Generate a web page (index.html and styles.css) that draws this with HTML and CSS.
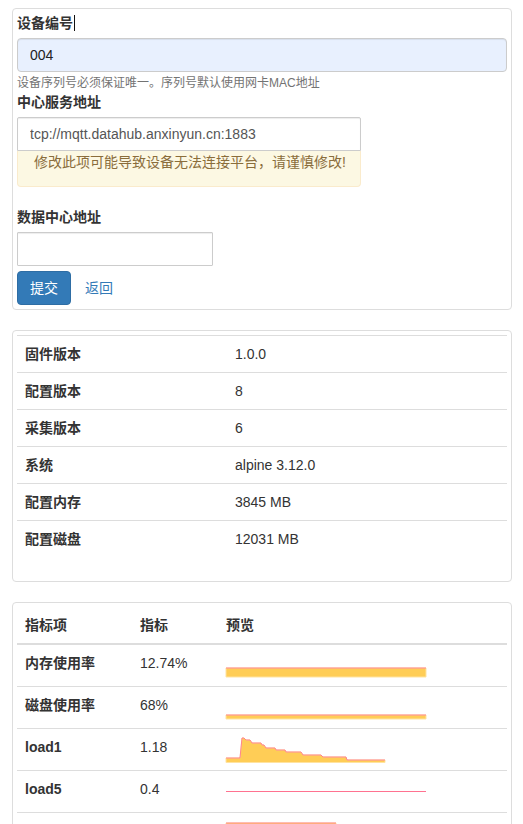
FILE: index.html
```html
<!DOCTYPE html>
<html lang="zh-CN">
<head>
<meta charset="utf-8">
<title>设备配置</title>
<link rel="stylesheet" href="styles.css">
</head>
<body>
<div class="page">
  <section class="panel panel-form">
    <form class="form">
      <label class="label">设备编号<span class="caret-mark"></span></label>
      <input class="input input-autofill" type="text" value="004">
      <p class="help">设备序列号必须保证唯一。序列号默认使用网卡MAC地址</p>
      <label class="label">中心服务地址</label>
      <div class="input-group">
        <input class="input input-attached" type="text" value="tcp://mqtt.datahub.anxinyun.cn:1883">
        <div class="warning">修改此项可能导致设备无法连接平台，请谨慎修改!</div>
      </div>
      <label class="label label-spaced">数据中心地址</label>
      <input class="input input-short" type="text" value="">
      <div class="actions">
        <button class="btn" type="button">提交</button>
        <a class="link" href="#">返回</a>
      </div>
    </form>
  </section>

  <section class="panel panel-info">
    <table class="table info-table">
      <tbody>
        <tr><th>固件版本</th><td>1.0.0</td></tr>
        <tr><th>配置版本</th><td>8</td></tr>
        <tr><th>采集版本</th><td>6</td></tr>
        <tr><th>系统</th><td>alpine 3.12.0</td></tr>
        <tr><th>配置内存</th><td>3845 MB</td></tr>
        <tr><th>配置磁盘</th><td>12031 MB</td></tr>
      </tbody>
    </table>
  </section>

  <section class="panel panel-metrics">
    <table class="table metric-table">
      <thead>
        <tr><th class="c1">指标项</th><th class="c2">指标</th><th class="c3">预览</th></tr>
      </thead>
      <tbody>
        <tr>
          <th>内存使用率</th><td>12.74%</td>
          <td><svg class="spark" width="200" height="25" viewBox="0 0 200 25">
            <polygon class="area" points="0,15 200,15 200,24 0,24"/>
            <polyline class="line" points="0,15 200,15"/>
          </svg></td>
        </tr>
        <tr>
          <th>磁盘使用率</th><td>68%</td>
          <td><svg class="spark" width="200" height="25" viewBox="0 0 200 25">
            <polygon class="area" points="0,20 200,20 200,24 0,24"/>
            <polyline class="line" points="0,20 200,20"/>
          </svg></td>
        </tr>
        <tr>
          <th>load1</th><td>1.18</td>
          <td><svg class="spark" width="200" height="25" viewBox="0 0 200 25">
            <polygon class="area" points="0,21 14,21 16,1 18,1 20,3 24,3 26,6 35,6 36,8 38,8 40,11 49,11 50,13 59,13 60,15 75,15 77,18 95,18 97,20 120,20 121,23 159,23 159,25.5 0,25.5"/>
            <polyline class="line" points="0,21 14,21 16,1 18,1 20,3 24,3 26,6 35,6 36,8 38,8 40,11 49,11 50,13 59,13 60,15 75,15 77,18 95,18 97,20 120,20 121,23 159,23"/>
          </svg></td>
        </tr>
        <tr>
          <th>load5</th><td>0.4</td>
          <td><svg class="spark" width="200" height="25" viewBox="0 0 200 25">
            <polyline class="line line-solid" points="0,12.5 200,12.5"/>
          </svg></td>
        </tr>
        <tr>
          <th></th><td></td>
          <td><svg class="spark" width="200" height="25" viewBox="0 0 200 25">
            <polygon class="area" points="0,2 110,2 110,24 0,24"/>
            <polyline class="line" points="0,2 110,2"/>
          </svg></td>
        </tr>
      </tbody>
    </table>
  </section>
</div>
</body>
</html>
```
FILE: styles.css
```css
* { box-sizing: border-box; }

html, body {
  margin: 0;
  padding: 0;
  background: #fff;
}

body {
  font-family: "Liberation Sans", Arial, "Noto Sans CJK SC", sans-serif;
  font-size: 14px;
  line-height: 20px;
  color: #333;
}

.page {
  padding: 8px 11px 8px 12px;
}

.panel {
  width: 500px;
  border: 1px solid #ddd;
  border-radius: 4px;
  padding: 4px;
  margin-bottom: 20px;
  background: #fff;
}

.form {
  display: flex;
  flex-direction: column;
  align-items: flex-start;
  margin: 0;
}

.label {
  display: block;
  font-weight: bold;
  margin-bottom: 5px;
  line-height: 20px;
}

.label-spaced {
  margin-top: 20px;
}

.caret-mark {
  display: inline-block;
  width: 1px;
  height: 16px;
  background: #111;
  margin-left: 1px;
  vertical-align: -3px;
}

.input {
  display: block;
  height: 34px;
  padding: 6px 12px;
  font-family: inherit;
  font-size: 14px;
  line-height: 20px;
  color: #555;
  background: #fff;
  border: 1px solid #ccc;
  border-radius: 4px;
  box-shadow: inset 0 1px 1px rgba(0, 0, 0, 0.075);
  outline: none;
  margin: 0;
}

.input-autofill {
  width: 100%;
  background: #e8f0fe;
  color: #222;
}

.help {
  margin: 3px 0 0;
  font-size: 12px;
  line-height: 17px;
  color: #737373;
}

.input-group {
  width: 344px;
}

.input-attached {
  width: 100%;
  border-radius: 2px 2px 0 0;
}

.warning {
  padding: 1px 4px 14px 16px;
  background: #fcf8e3;
  border: 1px solid #faebcc;
  border-top: 0;
  border-radius: 0 0 4px 4px;
  color: #8a6d3b;
  line-height: 20px;
  white-space: nowrap;
}

.input-short {
  width: 196px;
  border-radius: 1px;
}

.actions {
  display: flex;
  align-items: center;
  margin-top: 5px;
}

.btn {
  height: 34px;
  width: 54px;
  padding: 6px 12px;
  font-family: inherit;
  font-size: 14px;
  line-height: 20px;
  color: #fff;
  background: #337ab7;
  border: 1px solid #2e6da4;
  border-radius: 4px;
  margin: 0;
}

.link {
  margin-left: 14px;
  color: #337ab7;
  text-decoration: none;
}

.table {
  width: 100%;
  border-collapse: collapse;
  border-spacing: 0;
  margin-bottom: 20px;
}

.table th,
.table td {
  padding: 8px;
  text-align: left;
  vertical-align: top;
  line-height: 20px;
  border-top: 1px solid #ddd;
}

.table th {
  font-weight: bold;
}

.info-table th {
  width: 210px;
}

.metric-table thead th {
  border-top: 0;
  border-bottom: 2px solid #ddd;
}

.metric-table tbody tr:first-child th,
.metric-table tbody tr:first-child td {
  border-top: 0;
}

.metric-table .c1 { width: 115px; }
.metric-table .c2 { width: 86px; }

.spark {
  display: block;
  overflow: visible;
}

.spark .area {
  fill: #ffcd56;
  stroke: #ffe3a0;
  stroke-width: 1;
}

.spark .line {
  fill: none;
  stroke: #ff6384;
  stroke-opacity: 0.75;
  stroke-width: 1;
}

.spark .line-solid {
  stroke-opacity: 0.9;
}
```
